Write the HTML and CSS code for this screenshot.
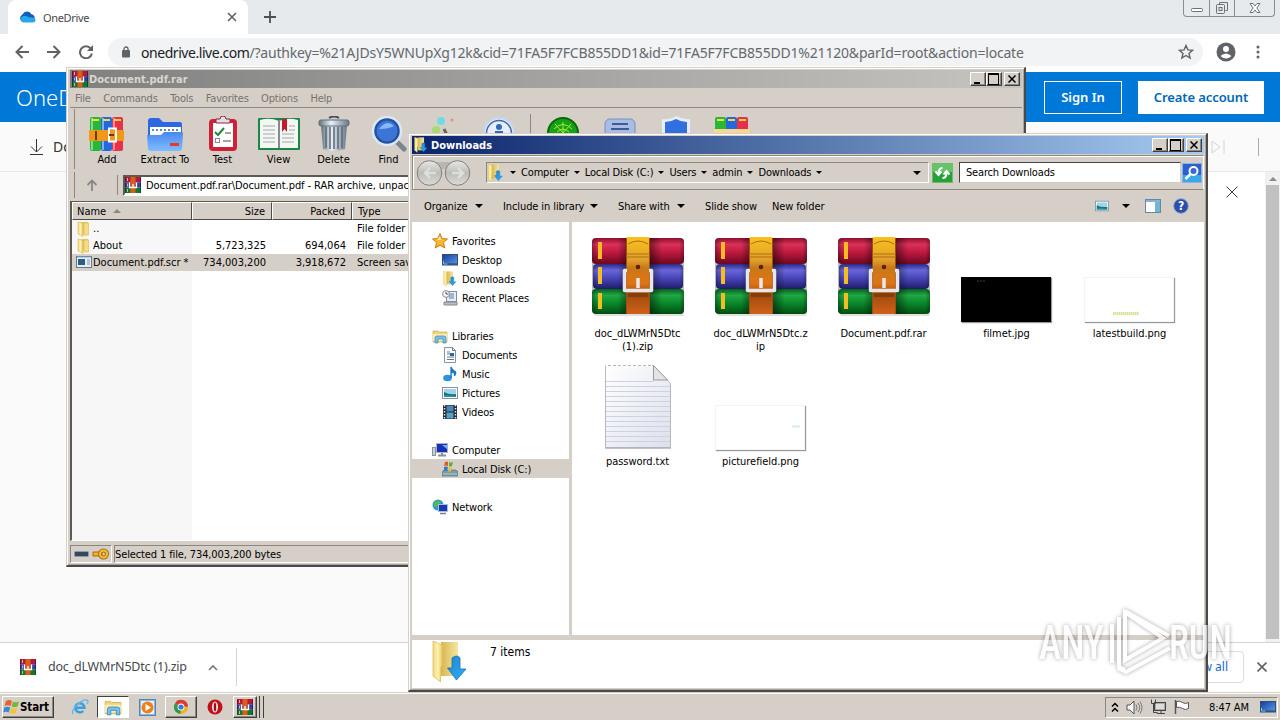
FILE: index.html
```html
<!DOCTYPE html>
<html lang="en">
<head>
  <meta charset="UTF-8" />
  <meta name="viewport" content="width=device-width, initial-scale=1" />
  <title>Downloads</title>
  <link rel="stylesheet" href="styles.css">
</head>
<body>

  <!-- shared icons -->
  <svg class="defs" width="0" height="0">
    <defs>
      <linearGradient id="g-red" x1="0" y1="0" x2="0" y2="1"><stop offset="0" stop-color="#8c1030"/><stop offset=".25" stop-color="#dc3058"/><stop offset=".6" stop-color="#b8163c"/><stop offset="1" stop-color="#6c0820"/></linearGradient>
      <linearGradient id="g-blue" x1="0" y1="0" x2="0" y2="1"><stop offset="0" stop-color="#29298c"/><stop offset=".25" stop-color="#6866d8"/><stop offset=".6" stop-color="#4442b4"/><stop offset="1" stop-color="#1f1c68"/></linearGradient>
      <linearGradient id="g-green" x1="0" y1="0" x2="0" y2="1"><stop offset="0" stop-color="#05601c"/><stop offset=".25" stop-color="#22a844"/><stop offset=".6" stop-color="#078428"/><stop offset="1" stop-color="#034d10"/></linearGradient>
      <linearGradient id="g-belt" x1="0" y1="0" x2="0" y2="1"><stop offset="0" stop-color="#f8c21c"/><stop offset=".3" stop-color="#e0a02c"/><stop offset=".4" stop-color="#c87818"/><stop offset=".6" stop-color="#e07414"/><stop offset=".75" stop-color="#a04c10"/><stop offset="1" stop-color="#d06018"/></linearGradient>
      <linearGradient id="g-shade" x1="0" y1="0" x2="1" y2="0"><stop offset="0" stop-color="#000" stop-opacity=".3"/><stop offset=".06" stop-color="#000" stop-opacity="0"/><stop offset=".28" stop-color="#000" stop-opacity="0"/><stop offset=".36" stop-color="#000" stop-opacity=".3"/><stop offset=".64" stop-color="#000" stop-opacity=".4"/><stop offset=".76" stop-color="#000" stop-opacity="0"/><stop offset=".95" stop-color="#000" stop-opacity="0"/><stop offset="1" stop-color="#000" stop-opacity=".3"/></linearGradient>
      <linearGradient id="g-folder" x1="0" y1="0" x2="1" y2="0"><stop offset="0" stop-color="#f2d878"/><stop offset=".5" stop-color="#fdf2b4"/><stop offset="1" stop-color="#e8c75c"/></linearGradient>
      <linearGradient id="g-back" x1="0" y1="0" x2="1" y2="0"><stop offset="0" stop-color="#d8b650"/><stop offset="1" stop-color="#f6e6a0"/></linearGradient>
      <linearGradient id="g-arrow" x1="0" y1="0" x2="1" y2="1"><stop offset="0" stop-color="#1c84d0"/><stop offset="1" stop-color="#30b0f8"/></linearGradient>
      <linearGradient id="g-extract" x1="0" y1="0" x2="0" y2="1"><stop offset="0" stop-color="#4888f0"/><stop offset="1" stop-color="#80bcff"/></linearGradient>
      <linearGradient id="g-metal" x1="0" y1="0" x2="1" y2="0"><stop offset="0" stop-color="#60707c"/><stop offset=".4" stop-color="#e8f0f8"/><stop offset="1" stop-color="#687888"/></linearGradient>
      <linearGradient id="g-screen" x1="0" y1="0" x2="1" y2="1"><stop offset="0" stop-color="#1838a0"/><stop offset="1" stop-color="#58a0e8"/></linearGradient>
      <linearGradient id="g-page" x1="0" y1="0" x2="1" y2="1"><stop offset="0" stop-color="#fff"/><stop offset="1" stop-color="#dde0ec"/></linearGradient>
      <linearGradient id="g-nav" x1="0" y1="0" x2="0" y2="1"><stop offset="0" stop-color="#e8e8e6"/><stop offset=".5" stop-color="#bcbcb8"/><stop offset="1" stop-color="#dcdcd8"/></linearGradient>
    </defs>

    <symbol id="rar" viewBox="0 0 16 16">
      <rect width="16" height="5.3" fill="#b01a40"/><rect y="5.3" width="16" height="5.3" fill="#3a3aa8"/><rect y="10.6" width="16" height="5.4" fill="#107830"/>
      <path d="M.5 0v16M15.500 0v16" stroke="#000" stroke-opacity=".35"/><path d="M2.500 1v3M2.500 6.500v3M2.500 12v3" stroke="#e8b080"/>
      <rect x="5.500" width="5" height="16" fill="#dc5c14"/><path d="M4.500 5.500v5h7v-5M8 7v3" fill="none" stroke="#fff" stroke-width="1.300"/>
    </symbol>

    <symbol id="rar-big" viewBox="0 0 92 82">
      <rect x="2" y="76" width="90" height="4" rx="2" fill="#000" opacity=".12"/>
      <rect y="2" width="92" height="26" rx="4" fill="url(#g-red)"/>
      <rect x="1" y="28" width="90" height="25" rx="4" fill="url(#g-blue)"/>
      <rect y="53" width="92" height="25" rx="4" fill="url(#g-green)"/>
      <rect y="2" width="92" height="76" rx="4" fill="url(#g-shade)"/>
      <path d="M8 6v17M8 31v17M8 57v16" stroke="#f5bd22" stroke-width="4"/>
      <rect x="34" y="1" width="24" height="77" rx="2" fill="url(#g-belt)"/>
      <path d="M34.500 2v76M57.500 2v76" stroke="#9c5008"/>
      <path d="M36 8q10-6 20 0M34 18h24M34 21h24" fill="none" stroke="#b06c10"/>
      <circle cx="46" cy="31" r="2.300" fill="#5c2004"/>
      <path d="M36 57h20v4h-20z" fill="#6c2c08" opacity=".5"/>
      <path d="M35 34.500h-2.500v20h27v-20h-2.500" fill="none" stroke="#e6e6ec" stroke-width="3.500" stroke-linejoin="round"/>
      <path d="M46 42v10" stroke="#e8e8ee" stroke-width="3.500"/>
    </symbol>

    <symbol id="folder" viewBox="0 0 16 16">
      <path d="M5 1h7v12h-7z" fill="#e8c75c"/><path d="M2 1l5 1.500v13l-5-2.500z" fill="url(#g-folder)" stroke="#d8b850" stroke-width=".6"/><path d="M8 2h4.500v12h-4.500z" fill="#f6dc84" stroke="#d8b850" stroke-width=".6"/>
    </symbol>

    <symbol id="folder-dl" viewBox="0 0 36 42">
      <path d="M9 1h17v34h-17z" fill="url(#g-back)"/>
      <path d="M1 0l9.500 4v20l-2 3v14l-7.500-6z" fill="url(#g-folder)" stroke="#dab956" stroke-width=".7"/>
      <path d="M20 17q5-4 8 0v11h6l-9.500 11-9-12h4.500z" fill="url(#g-arrow)" stroke="#1d6fae" stroke-width=".8"/>
    </symbol>

    <symbol id="library" viewBox="0 0 16 16">
      <path d="M1 3h5l1 1h8v10h-14z" fill="#f0d478" stroke="#c8a040" stroke-width=".6"/><path d="M1 6h14v7h-14z" fill="#fbeeb0"/>
      <path d="M3 15v-5q0-2 2-2h7q2 0 2 2v5h-3v-4h-5v4z" fill="#78c0ec" stroke="#2f86c0" stroke-width=".7"/>
    </symbol>

    <symbol id="monitor" viewBox="0 0 16 16">
      <rect x=".5" y="2.500" width="15" height="10.500" fill="url(#g-screen)" stroke="#30506c"/><path d="M1 12h14" stroke="#204060"/><path d="M1.500 9v3h4" stroke="#78c8f0" fill="none"/>
    </symbol>

    <symbol id="picture" viewBox="0 0 16 16">
      <rect x=".5" y="2.500" width="15" height="11" fill="#fff" stroke="#8494a4"/><rect x="2" y="4" width="12" height="8" fill="#9cd4f0"/><path d="M2 7q5 3 12 2v3h-12z" fill="#1c7468"/><path d="M2 10q5 0 12 1v1h-12z" fill="#2890b0"/>
    </symbol>
  </svg>

  <div class="desktop">

    <!-- browser -->
    <div class="browser">
      <div class="tab-strip">
        <div class="tab">
          <svg width="17" height="12" viewBox="0 0 17 12"><path d="M4 11a4 4 0 0 1-.5-7.500 5 5 0 0 1 9-.2 4 4 0 0 1 .5 7.700z" fill="#0f5fb8"/><path d="M4 11.500a3.500 3.500 0 0 1 0-6.500q3-1 5 1l4 .5q3.500 0 3.500 2.500 0 2.500-3 2.500z" fill="#28a8ea"/></svg>
          <span class="tab-title">OneDrive</span>
          <svg width="10" height="10" viewBox="0 0 10 10"><path d="M1 1l8 8M9 1l-8 8" stroke="#5f6368" stroke-width="1.600"/></svg>
        </div>
        <svg class="new-tab" width="12" height="12" viewBox="0 0 12 12"><path d="M6 0v12M0 6h12" stroke="#4c5054" stroke-width="1.800"/></svg>
        <div class="chrome-controls">
          <span><svg width="12" height="16"><rect x=".5" y="8.500" width="11" height="3" rx="1" fill="#fff" stroke="#6c7074"/></svg></span>
          <span><svg width="14" height="16"><path d="M4.500 4.500v-2h8v8h-2" fill="none" stroke="#6c7074"/><rect x="1.500" y="4.500" width="8" height="9" rx="1" fill="none" stroke="#6c7074"/><rect x="4" y="7.500" width="3" height="3" fill="none" stroke="#6c7074"/></svg></span>
          <span><svg width="12" height="16"><path d="M1 3.500h3l2 2.500 2-2.500h3l-3.200 4.500 3.200 4.500h-3l-2-2.500-2 2.500h-3l3.200-4.500z" fill="#fff" stroke="#6c7074"/></svg></span>
        </div>
      </div>

      <div class="url-row">
        <svg width="14" height="14" viewBox="0 0 14 14"><path d="M14 7h-12.500M7.500 1l-6 6 6 6" fill="none" stroke="#5f6368" stroke-width="2"/></svg>
        <svg width="14" height="14" viewBox="0 0 14 14"><path d="M0 7h12.500M6.500 1l6 6-6 6" fill="none" stroke="#5f6368" stroke-width="2"/></svg>
        <svg width="14" height="14" viewBox="0 0 14 14"><path d="M11.700 3.500a6 6 0 1 0 1.200 5" fill="none" stroke="#5f6368" stroke-width="2"/><path d="M14 0v6h-6z" fill="#5f6368"/></svg>
        <div class="omnibox">
          <svg width="8" height="12" viewBox="0 0 8 12"><rect y="4" width="8" height="7.500" rx="1" fill="#5f6368"/><path d="M2 5v-2a2 2 0 0 1 4 0v2" fill="none" stroke="#5f6368" stroke-width="1.300"/></svg>
          <span class="url"><b>onedrive.live.com</b>/?authkey=%21AJDsY5WNUpXg12k&amp;cid=71FA5F7FCB855DD1&amp;id=71FA5F7FCB855DD1%21120&amp;parId=root&amp;action=locate</span>
          <svg width="16" height="16" viewBox="0 0 16 16"><path d="M8 1.500l1.900 4.400 4.600.4-3.500 3.100 1.100 4.600-4.100-2.500-4.100 2.500 1.100-4.600-3.500-3.100 4.600-.4z" fill="none" stroke="#5f6368" stroke-width="1.400"/></svg>
        </div>
        <svg class="avatar" width="20" height="20" viewBox="0 0 20 20"><circle cx="10" cy="10" r="9.500" fill="#5f6368"/><circle cx="10" cy="7" r="3" fill="#fff"/><path d="M4.500 14q5.500-5 11 0-5.500 5-11 0z" fill="#fff"/></svg>
        <svg class="kebab" width="4" height="14"><circle cx="2" cy="2" r="1.500" fill="#5f6368"/><circle cx="2" cy="7" r="1.500" fill="#5f6368"/><circle cx="2" cy="12" r="1.500" fill="#5f6368"/></svg>
      </div>

      <div class="od-header">
        <span class="od-brand">OneDrive</span>
        <button class="od-sign">Sign In</button>
        <button class="od-create">Create account</button>
      </div>
      <div class="od-commands">
        <svg width="13" height="16" viewBox="0 0 13 16"><path d="M6.500 0v13M1 7.500l5.500 5.500 5.500-5.500M0 15.500h13" fill="none" stroke="#333"/></svg>
        <span class="od-download">Download</span>
        <svg class="od-next" width="14" height="14"><path d="M1 1l8 6-8 6zM13 0v14" fill="none" stroke="#d4d4d4"/></svg>
        <i class="od-bar"></i>
      </div>
      <div class="od-body">
        <div class="od-stage"></div>
        <div class="od-side"><svg width="12" height="12"><path d="M.5.5l11 11M11.500.5l-11 11" stroke="#444"/></svg></div>
        <div class="od-scroll"><i></i><b></b></div>
      </div>

      <div class="download-bar">
        <svg width="16" height="16"><use href="#rar"/></svg>
        <span class="dl-name">doc_dLWMrN5Dtc (1).zip</span>
        <svg class="dl-chevron" width="10" height="7"><path d="M1 6l4-4 4 4" fill="none" stroke="#777" stroke-width="1.600"/></svg>
        <button class="show-all">Show all</button>
        <svg width="10" height="10"><path d="M.5.5l9 9M9.500.5l-9 9" stroke="#5f6368" stroke-width="1.600"/></svg>
      </div>
    </div>

    <!-- archive window -->
    <div class="window archive">
      <div class="title-bar inactive">
        <svg width="16" height="16"><use href="#rar"/></svg>
        <span class="title-text">Document.pdf.rar</span>
        <div class="controls"><i class="min"></i><i class="max"></i><i class="close"><svg width="8" height="8"><path d="M.5.5l7 7M7.500.5l-7 7" stroke="#000" stroke-width="1.500"/></svg></i></div>
      </div>
      <div class="menu"><span>File</span><span>Commands</span><span>Tools</span><span>Favorites</span><span>Options</span><span>Help</span></div>
      <div class="rar-tools">
        <div class="tool">
          <svg width="36" height="36" viewBox="0 0 36 36"><rect x="1" y="1" width="11" height="34" rx="2" fill="#28b838"/><rect x="12" y="1" width="11" height="34" rx="2" fill="#2468e0"/><rect x="23" y="1" width="11" height="34" rx="2" fill="#e83048"/><path d="M3 2v32M14 2v32M25 2v32" stroke="#fff" stroke-opacity=".45" stroke-width="2"/><path d="M3 4h7M14 4h7M25 4h7" stroke="#f8d840" stroke-width="2"/><rect y="14" width="35" height="11" rx="1" fill="#f09818"/><rect x="20" y="12.500" width="7" height="13" fill="none" stroke="#fff" stroke-width="2"/><path d="M20 19h5M7 15v9" stroke="#703808" stroke-width="2"/></svg>
          <span>Add</span>
        </div>
        <div class="tool">
          <svg width="38" height="36" viewBox="0 0 38 36"><path d="M2 5q0-3 3-3h8l4 4h17q2 0 2 3v24h-34z" fill="#2d68e0"/><path d="M4 11h31v10h-31z" fill="#fff"/><path d="M6 14h27" stroke="#6088c0" stroke-width="2" stroke-dasharray="2 2"/><path d="M1 19h14l3-3h18q1 0 1 2l-1 14q0 3-3 3h-28q-3 0-3-3z" fill="url(#g-extract)"/><rect x="24" y="27" width="9" height="3" fill="#e83828"/></svg>
          <span>Extract To</span>
        </div>
        <div class="tool">
          <svg width="30" height="36" viewBox="0 0 30 36"><rect x="1" y="3" width="28" height="32" rx="4" fill="#d02038"/><rect x="5" y="7" width="20" height="24" fill="#fff"/><path d="M8 7v-4h4q0-3 3-3t3 3h4v4z" fill="#d8e0e8" stroke="#a02030"/><path d="M7 16l3 3 6-7" fill="none" stroke="#208838" stroke-width="2"/><path d="M17 17h6M15 25h8" stroke="#889" stroke-width="1.500"/><rect x="7.500" y="22.500" width="4" height="4" fill="none" stroke="#889"/></svg>
          <span>Test</span>
        </div>
        <div class="tool">
          <svg width="42" height="36" viewBox="0 0 42 36"><rect y="2" width="42" height="32" rx="1" fill="#188848"/><path d="M2 4q10-3 19 1 9-4 19-1v28h-38z" fill="#f4f6f2"/><path d="M21 4v28" stroke="#889" stroke-width="2"/><path d="M5 10h12M5 14h12M5 18h12M5 22h12M5 26h12M24 18h12M24 22h12M24 26h12M31 10h6M31 14h6" stroke="#a0a8b0"/><path d="M24 3h5v13l-2.500-3-2.500 3z" fill="#c81830"/></svg>
          <span>View</span>
        </div>
        <div class="tool">
          <svg width="32" height="36" viewBox="0 0 32 36"><path d="M11 2q5-3 10 0" fill="none" stroke="#444c58" stroke-width="2"/><path d="M3 9h26l-2 24q-11 4-22 0z" fill="url(#g-metal)"/><path d="M8 11v21M12 11v22M16 11v22M20 11v22M24 11v21" stroke="#5c6878" stroke-width="1.500"/><rect x="1" y="4" width="30" height="6" rx="2" fill="url(#g-metal)" stroke="#606c7c"/></svg>
          <span>Delete</span>
        </div>
        <div class="tool">
          <svg width="36" height="36" viewBox="0 0 36 36"><path d="M24 24l9 9" stroke="#7c8494" stroke-width="5" stroke-linecap="round"/><circle cx="16" cy="15" r="14" fill="#24509c" stroke="#dce8f8" stroke-width="2.500"/><circle cx="16" cy="15" r="10.500" fill="#3c74d8"/><path d="M8 13q8-10 15-3-5 3-15 3z" fill="#88b8f8"/></svg>
          <span>Find</span>
        </div>
        <div class="tool">
          <svg width="36" height="36" viewBox="0 0 36 36"><circle cx="15" cy="5" r="4" fill="#70dce4"/><circle cx="26" cy="4" r="1.500" fill="#e88898"/><circle cx="10" cy="14" r="4" fill="#a8dc70"/><path d="M18 13l8 16" stroke="#665" stroke-width="3"/></svg>
          <span>Wizard</span>
        </div>
        <div class="tool">
          <svg width="32" height="36" viewBox="0 0 32 36"><circle cx="16" cy="17" r="15" fill="#e4eefc" stroke="#c4d8f4" stroke-width="2"/><circle cx="16" cy="17" r="12.500" fill="none" stroke="#4868a8" stroke-width="1.500"/><circle cx="16" cy="11" r="3" fill="#3468b8"/><path d="M12 17h6v9" fill="none" stroke="#3468b8" stroke-width="4"/></svg>
          <span>Info</span>
        </div>
        <i class="tool-sep"></i>
        <div class="tool">
          <svg width="32" height="36" viewBox="0 0 32 36"><circle cx="16" cy="17" r="15" fill="#18a018" stroke="#086808" stroke-width="2"/><path d="M16 17l-8-9M16 17l8-9M16 17v-11M7 13q9-9 18 0M10 16q6-6 12 0" stroke="#98f038" fill="none"/></svg>
          <span>VirusScan</span>
        </div>
        <div class="tool">
          <svg width="32" height="36" viewBox="0 0 32 36"><rect x="1" y="3" width="30" height="24" rx="5" fill="#a8bce4" stroke="#7890c0"/><path d="M8 8h16M7 13h18" stroke="#3c5c98" stroke-width="2"/></svg>
          <span>Comment</span>
        </div>
        <div class="tool">
          <svg width="30" height="36" viewBox="0 0 30 36"><path d="M15 0q7 4 14 3v14q-2 12-14 16-12-4-14-16v-14q8 1 14-3z" fill="#e8eefc"/><path d="M15 3q5 3 11 3v11q-2 8-11 13-9-5-11-13v-11q6 0 11-3z" fill="#3070e0"/></svg>
          <span>Protect</span>
        </div>
        <div class="tool">
          <svg width="36" height="36" viewBox="0 0 36 36"><rect x="1" y="1" width="11" height="15" rx="2" fill="#28b838"/><rect x="12" y="1" width="11" height="15" rx="2" fill="#2468e0"/><rect x="23" y="1" width="11" height="15" rx="2" fill="#e83048"/><path d="M3 4h7M14 4h7M25 4h7" stroke="#f8d840" stroke-width="2"/><rect y="13" width="36" height="20" fill="#f8d890"/></svg>
          <span>SFX</span>
        </div>
      </div>
      <div class="rar-address">
        <svg class="up" width="12" height="12"><path d="M6 12v-10M1.500 6l4.500-4.500 4.500 4.500" fill="none" stroke="#888" stroke-width="1.800"/></svg>
        <i class="grip"></i>
        <div class="rar-path"><svg width="16" height="16"><use href="#rar"/></svg><span>Document.pdf.rar\Document.pdf - RAR archive, unpacked size 745,733,517 bytes</span></div>
      </div>
      <div class="rar-list">
        <div class="row head"><span>Name <i class="sort"></i></span><span>Size</span><span>Packed</span><span>Type</span></div>
        <div class="row"><span><svg width="16" height="16"><use href="#folder"/></svg>..</span><span></span><span></span><span>File folder</span></div>
        <div class="row"><span><svg width="16" height="16"><use href="#folder"/></svg>About</span><span>5,723,325</span><span>694,064</span><span>File folder</span></div>
        <div class="row selected"><span><svg width="16" height="16"><rect x=".5" y="1.500" width="15" height="11" fill="#e8eef4" stroke="#607890"/><path d="M1 2h14" stroke="#7ca8d8"/><rect x="2" y="4" width="7" height="6" fill="#286080"/><path d="M11 5h3M11 7h3M11 9h3" stroke="#8898a8"/></svg>Document.pdf.scr *</span><span>734,003,200</span><span>3,918,672</span><span>Screen saver</span></div>
      </div>
      <div class="rar-status">
        <div class="status-icons"><svg width="15" height="8"><rect x=".5" y="1.500" width="14" height="5" rx="1" fill="#38465c" stroke="#8c98ac"/></svg><svg width="17" height="12"><path d="M1 4h9v4h-9z" fill="#f0b028" stroke="#a86c10"/><circle cx="11.500" cy="6" r="3.500" fill="none" stroke="#a86c10" stroke-width="4"/><circle cx="11.500" cy="6" r="3.500" fill="none" stroke="#f8c038" stroke-width="2"/></svg></div>
        <div class="status-text">Selected 1 file, 734,003,200 bytes</div>
      </div>
    </div>

    <!-- explorer window -->
    <div class="window explorer">
      <div class="title-bar active">
        <svg width="14" height="16"><use href="#folder-dl"/></svg>
        <span class="title-text">Downloads</span>
        <div class="controls"><i class="min"></i><i class="max"></i><i class="close"><svg width="8" height="8"><path d="M.5.5l7 7M7.500.5l-7 7" stroke="#000" stroke-width="1.500"/></svg></i></div>
      </div>
      <div class="nav-bar">
        <svg width="55" height="28" viewBox="0 0 55 28"><path d="M14 3h27v7h-27z" fill="#b8b6b0"/><circle cx="13.500" cy="14" r="12.300" fill="url(#g-nav)" stroke="#828078"/><circle cx="41.500" cy="14" r="12.300" fill="url(#g-nav)" stroke="#828078"/><path d="M20 14h-11M14 9l-5 5 5 5M36 14h11M42 9l5 5-5 5" fill="none" stroke="#dededa" stroke-width="2.500"/></svg>
        <div class="crumbs">
          <svg width="17" height="18"><use href="#folder-dl"/></svg>
          <i class="arrow"></i><span>Computer</span>
          <i class="arrow"></i><span>Local Disk (C:)</span>
          <i class="arrow"></i><span>Users</span>
          <i class="arrow"></i><span>admin</span>
          <i class="arrow"></i><span>Downloads</span>
          <i class="arrow"></i><i class="arrow last"></i>
        </div>
        <svg class="refresh" width="21" height="20" viewBox="0 0 21 20"><rect x=".5" y=".5" width="20" height="19" fill="#28a038" stroke="#6cbc70"/><path d="M1 1h19v8h-19z" fill="#64c468"/><path d="M10.500 5q-4 0-4 6M3.500 8.500l3 3.500 3-3.500M10.500 15q4 0 4-5M11.500 11.500l3-3.500 3 3.500" fill="none" stroke="#fff" stroke-width="2"/></svg>
        <div class="search">Search Downloads</div>
        <svg class="search-btn" width="20" height="20" viewBox="0 0 20 20"><rect x=".5" y=".5" width="19" height="19" fill="#2c60d0" stroke="#8cb0e8"/><path d="M1 12h18v7h-18z" fill="#38a8e8"/><circle cx="11.500" cy="8" r="4" fill="#3868d0" stroke="#fff" stroke-width="2"/><path d="M8.500 11l-5 5" stroke="#fff" stroke-width="2.500"/></svg>
      </div>
      <div class="command-bar">
        <span class="m1">Organize <i class="arrow big"></i></span>
        <span class="m2">Include in library <i class="arrow big"></i></span>
        <span class="m3">Share with <i class="arrow big"></i></span>
        <span class="m4">Slide show</span>
        <span>New folder</span>
        <svg class="view-icon" width="14" height="14"><use href="#picture"/></svg>
        <i class="arrow big"></i>
        <svg class="pane-icon" width="16" height="14"><rect x=".5" y=".5" width="15" height="13" fill="#fff" stroke="#6888a8"/><path d="M1 2h14" stroke="#88b0d8" stroke-width="2"/><rect x="10" y="3" width="5" height="10" fill="#70b8d0"/></svg>
        <svg class="help-icon" width="16" height="16"><circle cx="8" cy="8" r="7.300" fill="#2850a8" stroke="#8ca0d0"/><text x="8" y="12.300" text-anchor="middle" class="help-mark">?</text></svg>
      </div>
      <div class="panes">
        <div class="tree">
          <div class="node root"><svg width="16" height="16"><path d="M8 .5l2.200 5 5.300.5-4 3.600 1.200 5.400-4.700-2.800-4.700 2.800 1.200-5.400-4-3.600 5.300-.5z" fill="#f8b830" stroke="#d07818"/><path d="M8 3l1 4h-4z" fill="#fff0a0"/></svg>Favorites</div>
          <div class="node"><svg width="16" height="16"><use href="#monitor"/></svg>Desktop</div>
          <div class="node"><svg width="16" height="16"><use href="#folder-dl"/></svg>Downloads</div>
          <div class="node"><svg width="16" height="16"><rect x="4.500" y="1.500" width="10" height="10" fill="#e8eef4" stroke="#7890a4"/><path d="M7 4h5M7 6h5M7 8h5" stroke="#5880b0"/><path d="M2 12h13v3h-13z" fill="#b8bcc0" stroke="#889"/><circle cx="4" cy="4" r="3.400" fill="#f6f6f6" stroke="#889"/><path d="M4 2v2h2" fill="none" stroke="#555"/></svg>Recent Places</div>
          <div class="node gap"></div>
          <div class="node root"><svg width="16" height="16"><use href="#library"/></svg>Libraries</div>
          <div class="node"><svg width="16" height="16"><path d="M2.500.5h8l3 3v12h-11z" fill="#fff" stroke="#8894a4"/><path d="M10.500.5v3h3M5 5h3M5 7h3M5 10h7M5 12.500h7" fill="none" stroke="#68788c"/><rect x="8" y="6" width="4" height="3" fill="#2868a8"/></svg>Documents</div>
          <div class="node"><svg width="16" height="16"><ellipse cx="5.500" cy="12" rx="4.300" ry="3.300" fill="#2c94dc"/><path d="M9 12v-11q1 3 3.500 4t0 5q1-4-3-4" fill="#1878c4" stroke="#1878c4" stroke-width="1.300"/></svg>Music</div>
          <div class="node"><svg width="16" height="16"><use href="#picture"/></svg>Pictures</div>
          <div class="node"><svg width="16" height="16"><rect x="1" y="1" width="14" height="14" fill="#202830"/><path d="M2.500 1v14M13.500 1v14" stroke="#e8e8e8" stroke-width="1.500" stroke-dasharray="1.500 1.500"/><rect x="4.500" y="1.500" width="7" height="6" fill="#4888b8"/><rect x="4.500" y="8.500" width="7" height="6" fill="#58a0c8"/></svg>Videos</div>
          <div class="node gap"></div>
          <div class="node root"><svg width="16" height="16"><rect x=".5" y="5.500" width="3" height="8" fill="#ccd0d8" stroke="#88909c"/><rect x="4.500" y="1.500" width="11" height="9" fill="#1830b8" stroke="#a8b4c4"/><path d="M10 3l5 4v-4z" fill="#78b0f8"/><path d="M6 13.500h8M10 11v2" stroke="#8890a0" stroke-width="2"/></svg>Computer</div>
          <div class="node current"><svg width="16" height="16"><path d="M0 11l2-2h12l2 2v4h-16z" fill="#7c9ca4" stroke="#587078" stroke-width=".7"/><path d="M1 13h14" stroke="#a8d0d0"/><path d="M3 1q2-1 3 0v4q-2-1-4 0z" fill="#e85820"/><path d="M7 1q2 1 4 0l-1 4q-2 1-3 0z" fill="#60b030"/><path d="M2 6q2-1 4 0l-1 4q-1-1-3 0z" fill="#3078d0"/><path d="M7 6q2 1 3 0l-1 4q-2 1-3 0z" fill="#f0c020"/></svg>Local Disk (C:)</div>
          <div class="node gap"></div>
          <div class="node root"><svg width="16" height="16"><circle cx="6" cy="6" r="5.500" fill="#2c98d8"/><path d="M2 3q4-3 7 0l-3 3q-2 4-4 1z" fill="#58b850"/><rect x="6.500" y="5.500" width="9" height="7" fill="#1838b8" stroke="#b0bcd0"/><path d="M8 14.500h6" stroke="#7080a0" stroke-width="1.500"/></svg>Network</div>
        </div>
        <div class="files">
          <div class="file"><div class="thumb"><svg class="rar-big" width="92" height="82"><use href="#rar-big"/></svg></div><span>doc_dLWMrN5Dtc<br>(1).zip</span></div>
          <div class="file"><div class="thumb"><svg class="rar-big" width="92" height="82"><use href="#rar-big"/></svg></div><span>doc_dLWMrN5Dtc.z<br>ip</span></div>
          <div class="file"><div class="thumb"><svg class="rar-big" width="92" height="82"><use href="#rar-big"/></svg></div><span>Document.pdf.rar</span></div>
          <div class="file"><div class="thumb"><div class="image black"><svg width="88" height="43"><path d="M15 3h8" stroke="#3c4420" stroke-dasharray="2 1"/></svg></div></div><span>filmet.jpg</span></div>
          <div class="file"><div class="thumb"><div class="image"><svg width="88" height="43"><path d="M28 35.500h26" stroke="#d8e098" stroke-width="3" stroke-dasharray="1.500 .5"/></svg></div></div><span>latestbuild.png</span></div>
          <div class="file">
            <div class="thumb"><svg class="text-doc" width="68" height="86" viewBox="0 0 68 86">
              <path d="M1.500 1.500h48l17 18v64h-65z" fill="url(#g-page)" stroke="#b8b8c0"/>
              <path d="M2 17.500h48M2 22.500h64M2 27.500h64M2 32.500h64M2 37.500h64M2 42.500h64M2 47.500h64M2 52.500h64M2 57.500h64M2 62.500h64M2 67.500h64M2 72.500h64M2 77.500h64" stroke="#ccd2e0"/>
              <path d="M2 2h46" stroke="#fff" stroke-width="2" stroke-dasharray="2 3"/>
              <path d="M49.500 1.500v14.500h14z" fill="#e4e4e4" stroke="#999"/><path d="M1 84h66" stroke="#b0b0b4" stroke-width="1.500"/>
            </svg></div>
            <span>password.txt</span>
          </div>
          <div class="file"><div class="thumb"><div class="image"><svg width="88" height="43"><path d="M76 20.500h8" stroke="#d4ecf0" stroke-width="2"/></svg></div></div><span>picturefield.png</span></div>
        </div>
      </div>
      <div class="details"><svg width="36" height="42"><use href="#folder-dl"/></svg><span>7 items</span></div>
    </div>

    <!-- taskbar -->
    <div class="taskbar">
      <div class="start">
        <svg width="17" height="16" viewBox="0 0 17 16"><path d="M3 2q3-2 6 0l-1.500 5q-3-1.500-6 0z" fill="#e8602c"/><path d="M10 2.500q3 1.500 6 0l-1.500 5q-3 1.500-6 0z" fill="#78b838"/><path d="M1.200 8.500q3-1.500 6 0l-1.500 5q-3-1.500-5.500 0z" fill="#3c88d8"/><path d="M8.200 9q3 1.500 6 0l-1.500 5q-3 1.500-6 0z" fill="#f4c430"/></svg>
        <b>Start</b>
      </div>
      <div class="task ie"><svg width="18" height="18" viewBox="0 0 18 18"><path d="M4.800 9.800h8.700a4.600 4.600 0 1 0-1.300 3.200" fill="none" stroke="#38a0e0" stroke-width="2.500"/><path d="M2 16q-2-3 4-9t10-5q2 1 0 4" fill="none" stroke="#60b8e8" stroke-width="1.300"/></svg></div>
      <div class="task pressed"><svg width="18" height="18"><use href="#library"/></svg></div>
      <div class="task player"><svg width="17" height="17"><rect x=".5" y=".5" width="16" height="16" fill="#88b8e0" stroke="#4c88c0"/><rect x="2" y="2" width="13" height="13" fill="#e8f0f8"/><circle cx="8.500" cy="8.500" r="6" fill="#f08018"/><path d="M6.500 5v7l5.500-3.500z" fill="#fff"/></svg></div>
      <div class="task raised"><svg width="16" height="16"><circle cx="8" cy="8" r="7" fill="#e8b820"/><path d="M8 8L2 4.300A7 7 0 0 1 15 7.500z" fill="#d83c30"/><path d="M8 8L2 4.300A7 7 0 0 0 7.500 15z" fill="#30984c"/><circle cx="8" cy="8" r="3.500" fill="#fff"/><circle cx="8" cy="8" r="2.600" fill="#3c78d8"/></svg></div>
      <div class="task opera"><svg width="16" height="16"><circle cx="8" cy="8" r="7.500" fill="#c01018"/><ellipse cx="8" cy="8" rx="3" ry="5.500" fill="#f4e4e4"/><ellipse cx="8" cy="8" rx="1.200" ry="4.500" fill="#a00c10"/></svg></div>
      <div class="task stacked"><svg width="16" height="16"><use href="#rar"/></svg></div>
      <div class="tray">
        <svg width="8" height="11"><path d="M1 4.500l3-3 3 3M1 9.500l3-3 3 3" fill="none" stroke="#000" stroke-width="1.500"/></svg>
        <svg width="17" height="15"><path d="M1 5h3l4-4v13l-4-4h-3z" fill="#f8f8f8" stroke="#555"/><path d="M10 4.500q2 3 0 6M12 3q3.500 4.500 0 9M14 1.500q4 6 0 12" fill="none" stroke="#777"/></svg>
        <svg width="17" height="16"><rect x="4.500" y="3.500" width="11" height="8" fill="#aaa" stroke="#444"/><path d="M6 5h8v5h-8z" fill="#ddd"/><path d="M7 14.500h8M11 12v2" stroke="#444"/><path d="M1.500.5v4h4v-4M3.500 5v8.500h4" fill="none" stroke="#444"/></svg>
        <svg width="17" height="16"><path d="M1.500 1v14" stroke="#555" stroke-width="1.500"/><path d="M2.500 2.500q3-1 6 1t6 0v6q-3 2-6 0t-6-1z" fill="#fff" stroke="#555"/></svg>
        <span class="clock">8:47 AM</span>
        <svg width="16" height="16"><use href="#monitor"/></svg>
      </div>
    </div>

    <svg class="watermark" width="204" height="72" viewBox="0 0 204 72">
      <text x="5" y="53" textLength="65" lengthAdjust="spacingAndGlyphs">ANY</text>
      <path d="M78 18v39M85 11v50l6 3M91 6v48l38-22zM84 62l8 4 44-24M91 5l44 25" fill="none" stroke="#fff" stroke-width="4"/>
      <text x="135" y="53" textLength="63" lengthAdjust="spacingAndGlyphs">RUN</text>
    </svg>
  </div>

</body>
</html>
```
FILE: styles.css
```css
* {
  box-sizing: border-box;
}

body {
  margin: 0;
  font-family: "DejaVu Sans Condensed", "DejaVu Sans", sans-serif;
  font-stretch: condensed;
  font-size: 11px;
  color: #000;
  overflow: hidden;
}

.defs {
  position: absolute;
}

svg {
  display: block;
  flex: none;
}

button {
  font: inherit;
  padding: 0;
}

.desktop {
  position: relative;
  width: 1280px;
  height: 720px;
  overflow: hidden;
  display: flex;
  flex-direction: column;
  white-space: nowrap;
}

/* browser */
.browser {
  height: 692px;
  display: flex;
  flex-direction: column;
  background: #fff;
  font-family: "Noto Sans", sans-serif;
}

.tab-strip {
  height: 34px;
  display: flex;
  background: #e7eaed;
  padding-left: 8px;
}

.tab {
  width: 240px;
  height: 34px;
  border-radius: 8px 8px 0 0;
  background: #fff;
  display: flex;
  align-items: center;
  padding: 0 11px;
}

.tab-title {
  flex: 1;
  margin-left: 7px;
  font-size: 11px;
  letter-spacing: -0.35px;
  color: #45494d;
}

.new-tab {
  margin: 11px 0 0 16px;
}

.chrome-controls {
  margin: 0 5px 0 auto;
  height: 17px;
  display: flex;
  border: 1px solid #8a8e92;
  border-top: 0;
  border-radius: 0 0 4px 4px;
}

.chrome-controls span {
  width: 25px;
  display: flex;
  justify-content: center;
}

.chrome-controls span + span {
  border-left: 1px solid #8a8e92;
}

.chrome-controls span:last-child {
  width: 40px;
}

.url-row {
  height: 38px;
  flex: none;
  display: flex;
  align-items: center;
  gap: 18px;
  padding: 0 20px 2px 15px;
}

.omnibox {
  width: 1095px;
  height: 28px;
  margin-left: -3px;
  border-radius: 14px;
  background: #f1f3f4;
  display: flex;
  align-items: center;
  padding: 0 9px 0 14px;
}

.url {
  flex: 1;
  margin-left: 11px;
  font-size: 14px;
  letter-spacing: -0.19px;
  color: #65696d;
}

.url b {
  font-weight: 400;
  letter-spacing: -0.45px;
  color: #202124;
}

.avatar {
  margin-left: -5px;
}

.kebab {
  margin-left: 2px;
  margin-right: -2px;
}

.od-header {
  height: 50px;
  flex: none;
  display: flex;
  align-items: center;
  background: #0078d7;
  padding: 0 16px;
}

.od-brand {
  flex: 1;
  font-size: 22px;
  font-weight: 300;
  color: #fff;
}

.od-sign,
.od-create {
  width: 78px;
  height: 33px;
  border: 1px solid #fff;
  background: #0078d7;
  color: #fff;
  font-size: 13px;
  font-weight: 600;
}

.od-create {
  width: 126px;
  margin-left: 16px;
  background: #fff;
  color: #0067b8;
  letter-spacing: -0.1px;
}

.od-commands {
  height: 50px;
  flex: none;
  display: flex;
  align-items: center;
  background: #fafafa;
  border-bottom: 1px solid #e8e8e8;
  padding: 0 21px 0 30px;
}

.od-download {
  flex: 1;
  margin-left: 10px;
  font-size: 14px;
  color: #333;
}

.od-bar {
  height: 18px;
  margin-left: 33px;
  border-left: 1px solid #aaa;
}

.od-body {
  flex: 1;
  display: flex;
}

.od-stage {
  width: 1207px;
  background: #fafafa;
}

.od-side {
  flex: 1;
  padding: 14px 0 0 19px;
}

.od-scroll {
  width: 15px;
  background: #f1f1f1;
  display: flex;
  flex-direction: column;
  align-items: center;
}

.od-scroll i {
  border: 4px solid transparent;
  border-top: 0;
  border-bottom: 4px solid #8a8a8a;
  margin: 5px 0 4px;
}

.od-scroll b {
  width: 13px;
  height: 454px;
  background: #c1c1c1;
}

.download-bar {
  height: 50px;
  flex: none;
  display: flex;
  align-items: center;
  border-top: 1px solid #d4d4d4;
  padding: 0 13px 2px 20px;
}

.dl-name {
  margin-left: 12px;
  width: 160px;
  font-size: 12.5px;
  letter-spacing: -0.2px;
  color: #45494d;
}

.dl-chevron {
  padding: 16px 18px 15px 0;
  box-sizing: content-box;
  border-right: 1px solid #d4d4d4;
}

.show-all {
  width: 80px;
  height: 32px;
  margin: 0 13px 0 auto;
  border: 1px solid #dadce0;
  border-radius: 4px;
  background: #fff;
  color: #1a67d2;
  font-size: 12px;
  text-align: right;
  padding-right: 15px;
}

/* classic windows */
.window {
  position: absolute;
  display: flex;
  flex-direction: column;
  background: #d5cfc7;
  border: 1px solid #d5cfc7;
  border-right: 2px solid #4c4a48;
  border-bottom: 2px solid #4c4a48;
  box-shadow: inset 1px 1px #fff, inset -1px -1px #a8a49c;
  padding: 2px;
}

.title-bar {
  height: 18px;
  flex: none;
  display: flex;
  align-items: center;
  padding: 0 2px;
  color: #fff;
  font-weight: bold;
}

.title-bar.inactive {
  background: linear-gradient(90deg, #808080, #c6c4c0);
  color: #dad6ce;
}

.title-bar.active {
  background: linear-gradient(90deg, #0a246a, #a6caf0);
}

.title-text {
  flex: 1;
  margin-left: 1px;
}

.controls {
  display: flex;
}

.controls i {
  width: 16px;
  height: 14px;
  background: #d5cfc7;
  border: 1px solid;
  border-color: #fff #404040 #404040 #fff;
  box-shadow: inset -1px -1px #888;
  display: flex;
  align-items: center;
  justify-content: center;
}

.controls .min::before {
  content: "";
  width: 6px;
  height: 2px;
  margin: 7px 2px 0 0;
  background: #000;
}

.controls .max::before {
  content: "";
  width: 9px;
  height: 9px;
  margin: 0 1px 1px 0;
  border: 1px solid #000;
  border-top-width: 2px;
}

.controls .close {
  margin-left: 2px;
}

/* archive */
.archive {
  left: 66px;
  top: 67px;
  width: 960px;
  height: 500px;
  padding-left: 3px;
}

.menu {
  height: 20px;
  flex: none;
  display: flex;
  align-items: center;
  gap: 12.5px;
  padding: 2px 0 0 5px;
  color: #77736c;
  letter-spacing: -0.2px;
  border-bottom: 1px solid #8c8880;
}

.rar-tools {
  height: 60px;
  flex: none;
  margin-top: 1px;
  display: grid;
  grid-template-columns: 58px 58px 57px 55px 55px 55px 55px 55px 8px 58px 56px 56px 56px;
  padding: 7px 0 0 3px;
  margin-left: 4px;
  border-left: 1px solid #8c8880;
}

.tool {
  display: flex;
  flex-direction: column;
  align-items: center;
}

.tool span {
  line-height: 16px;
}

.tool-sep {
  justify-self: center;
  border-left: 1px solid #8c8880;
  margin-top: -2px;
}

.rar-address {
  height: 26px;
  flex: none;
  margin: 3px 0 3px 4px;
  display: flex;
  align-items: center;
  border-left: 1px solid #8c8880;
  padding-left: 11px;
}

.up {
  margin-right: 19px;
}

.grip {
  width: 1px;
  height: 20px;
  margin-right: 5px;
  background: #8c8880;
}

.rar-path {
  flex: 1;
  height: 21px;
  border: 2px solid #5c5a56;
  border-right-color: #fff;
  border-bottom-color: #fff;
  background: #fff;
  display: flex;
  align-items: center;
  gap: 5px;
  letter-spacing: -0.08px;
}

.rar-list {
  flex: 1;
  border: 1px solid #5c5a56;
  border-left-width: 2px;
  border-right-color: #fff;
  border-bottom-color: #fff;
  background: linear-gradient(90deg, #f7f7f7 120px, #fff 120px);
}

.row {
  height: 17px;
  display: grid;
  grid-template-columns: 120px 80px 80px 1fr;
  align-items: center;
}

.row span {
  display: flex;
  align-items: center;
  padding-left: 5px;
}

.row span:first-child {
  padding-left: 4px;
  gap: 1px;
}

.row span:nth-child(2),
.row span:nth-child(3) {
  justify-content: flex-end;
  padding-right: 6px;
}

.row.head {
  height: 18px;
  align-items: stretch;
  background: #d5cfc7;
}

.row.head span {
  border: 1px solid;
  border-color: #fff #4c4a48 #4c4a48 #fff;
}

.row.selected {
  background: #d5cfc7;
}

.sort {
  border: 4px solid transparent;
  border-top: 0;
  border-bottom: 4px solid #8c8880;
  margin-left: 6px;
}

.rar-status {
  height: 18px;
  flex: none;
  margin-top: 4px;
  display: flex;
  gap: 2px;
}

.status-icons,
.status-text {
  height: 18px;
  display: flex;
  align-items: center;
  border: 1px solid;
  border-color: #8c8880 #fff #fff #8c8880;
}

.status-icons {
  width: 42px;
  gap: 3px;
  padding-left: 3px;
}

.status-text {
  flex: 1;
  letter-spacing: -0.12px;
}

/* explorer */
.explorer {
  left: 408px;
  top: 133px;
  width: 800px;
  height: 559px;
  padding-left: 3px;
}

.explorer .title-text {
  margin-left: 3px;
}

.nav-bar {
  height: 35px;
  flex: none;
  margin-top: 1px;
  display: flex;
  align-items: center;
  border: 1px solid #8c8880;
  border-right-color: #fff;
  border-bottom-color: #8c8880;
  box-shadow: inset 1px 1px #fff;
  padding: 0 1px 0 3px;
  letter-spacing: -0.17px;
}

.crumbs {
  width: 443px;
  height: 21px;
  margin-left: 15px;
  display: flex;
  align-items: center;
  border: 1px solid;
  border-color: #8c8880 #fff #fff #8c8880;
}

.arrow {
  border: 3px solid transparent;
  border-top: 3px solid #000;
  border-bottom: 0;
}

.arrow.big {
  border-width: 4px 4px 0;
}

.crumbs .arrow {
  margin: 0 5px;
}

.crumbs svg + .arrow {
  margin-left: 6px;
}

.crumbs .last {
  margin-left: auto;
  border-width: 4px 4px 0;
  margin-right: 7px;
}

.refresh {
  margin: 0 6px 0 3px;
}

.search {
  flex: 1;
  height: 21px;
  line-height: 20px;
  background: #fff;
  border: 1px solid;
  border-color: #444 #ccc #ccc #444;
  padding: 0 0 0 6px;
}

.search-btn {
  margin-left: 1px;
}

.command-bar {
  height: 32px;
  flex: none;
  display: flex;
  align-items: center;
  padding: 0 15px 0 12px;
  letter-spacing: -0.1px;
}

.command-bar span {
  display: flex;
  align-items: center;
  justify-content: space-between;
}

.m1 {
  width: 59px;
  margin-right: 20px;
}

.m2 {
  width: 95px;
  margin-right: 20px;
}

.m3 {
  width: 67px;
  margin-right: 20px;
}

.m4 {
  margin-right: 15px;
}

.view-icon {
  margin: 0 13px 0 auto;
}

.pane-icon {
  margin: 0 12px 0 15px;
}

.help-mark {
  font-size: 12px;
  font-weight: bold;
  fill: #fff;
}

.panes {
  height: 413px;
  flex: none;
  display: flex;
  background: #fff;
}

.tree {
  width: 160px;
  padding-top: 9px;
  border-right: 3px solid #d5cfc7;
  letter-spacing: -0.13px;
}

.node {
  height: 19px;
  display: flex;
  align-items: center;
  gap: 4px;
  padding: 1px 0 0 30px;
}

.node svg {
  margin-top: -1px;
}

.node.root {
  padding-left: 20px;
}

.node.current {
  background: #d5cfc7;
}

.files {
  display: grid;
  grid-template-columns: repeat(5, 123px);
  grid-auto-rows: 128px;
  padding: 7px 0 0 4px;
  letter-spacing: -0.05px;
}

.file {
  text-align: center;
  line-height: 13px;
}

.thumb {
  height: 96px;
  margin-bottom: 2px;
  display: flex;
  align-items: flex-end;
  justify-content: center;
  padding-bottom: 3px;
}

.rar-big {
  margin-bottom: 4px;
}

.image {
  width: 90px;
  height: 45px;
  margin-right: 1px;
  background: #fff;
  border: 1px solid #f4f4f4;
  box-shadow: 1px 1px 1px #999;
}

.image.black {
  background: #000;
  border-color: #000;
}

.details {
  flex: 1;
  margin-top: 5px;
  display: flex;
  background: #fff;
  padding: 1px 0 0 20px;
}

.details span {
  margin: 4px 0 0 22px;
  font-size: 12px;
}

/* taskbar */
.taskbar {
  height: 28px;
  display: flex;
  align-items: center;
  background: #d5cfc7;
  border-top: 1px solid #d5cfc7;
  box-shadow: inset 0 1px #fff;
  padding: 1px 2px 0;
}

.start,
.task {
  height: 22px;
  display: flex;
  align-items: center;
}

.start,
.raised,
.stacked {
  border: 1px solid;
  border-color: #fff #404040 #404040 #fff;
  box-shadow: inset -1px -1px #8c8880;
}

.start {
  width: 52px;
  margin-right: 8px;
  font-size: 11.5px;
  letter-spacing: -0.1px;
}

.task {
  width: 32px;
  justify-content: center;
}

.pressed {
  border: 1px solid;
  border-color: #404040 #fff #fff #404040;
  background: #fff;
}

.task.ie {
  width: 35px;
}

.task.player {
  width: 36px;
}

.task.opera {
  width: 36px;
  padding-right: 1px;
}

.task.stacked {
  width: 24px;
  box-shadow: inset -1px -1px #8c8880, 2px 0 #d5cfc7, 3px 0 #404040, 6px 0 #d5cfc7, 7px 0 #404040;
}

.tray {
  height: 21px;
  width: 173px;
  margin-left: auto;
  display: flex;
  align-items: center;
  gap: 7px;
  border: 1px solid;
  border-color: #8c8880 #fff #fff #8c8880;
  padding-left: 5px;
}

.clock {
  width: 44px;
  margin: 0 0 0 11px;
  letter-spacing: -0.1px;
}

.watermark {
  position: absolute;
  left: 1034px;
  top: 606px;
  filter: drop-shadow(0 0 2px rgba(0, 0, 0, 0.5));
  opacity: 0.7;
}

.watermark text {
  font-family: Roboto, sans-serif;
  font-size: 49px;
  font-weight: 500;
  fill: #fff;
}
```
